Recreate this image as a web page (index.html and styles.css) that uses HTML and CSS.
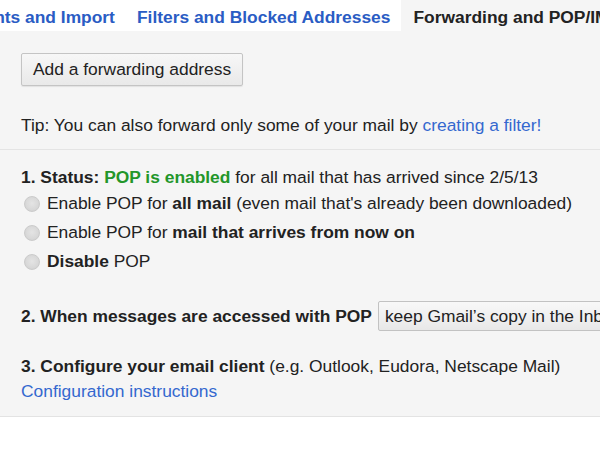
FILE: index.html
```html
<!DOCTYPE html>
<html lang="en">
<head>
<meta charset="utf-8">
<title>Settings - Forwarding and POP/IMAP</title>
<link rel="stylesheet" href="styles.css">
</head>
<body>
<div class="page">
  <nav class="tabs">
    <a class="tab" href="#">Accounts and Import</a>
    <a class="tab" href="#">Filters and Blocked Addresses</a>
    <a class="tab active" href="#">Forwarding and POP/IMAP</a>
  </nav>
  <main class="panel">
    <section class="section forwarding">
      <button class="btn" type="button">Add a forwarding address</button>
      <p class="tip">Tip: You can also forward only some of your mail by <a class="link" href="#">creating a filter!</a></p>
    </section>
    <section class="section pop">
      <div class="status"><b>1. Status:</b> <span class="ok">POP is enabled</span> for all mail that has arrived since 2/5/13</div>
      <ul class="options">
        <li class="option"><input class="radio" type="radio" name="pop"><span>Enable POP for <b>all mail</b> (even mail that's already been downloaded)</span></li>
        <li class="option"><input class="radio" type="radio" name="pop"><span>Enable POP for <b>mail that arrives from now on</b></span></li>
        <li class="option"><input class="radio" type="radio" name="pop"><span><b>Disable</b> POP</span></li>
      </ul>
      <div class="when">
        <b class="when-label">2. When messages are accessed with POP</b>
        <div class="select">keep Gmail’s copy in the Inbox</div>
      </div>
      <div class="configure">
        <div><b>3. Configure your email client</b> (e.g. Outlook, Eudora, Netscape Mail)</div>
        <div><a class="link" href="#">Configuration instructions</a></div>
      </div>
    </section>
  </main>
</div>
</body>
</html>
```
FILE: styles.css
```css
html, body {
  margin: 0;
  padding: 0;
  background: #ffffff;
}
body {
  font-family: "Liberation Sans", Arial, sans-serif;
  font-size: 17.4px;
  color: #222222;
  overflow: hidden;
  width: 600px;
  height: 450px;
}
.page {
  width: 600px;
  overflow: hidden;
}
.tabs {
  display: flex;
  height: 31px;
  background: #ffffff;
  margin-left: -70px;
  white-space: nowrap;
}
.tab {
  flex-shrink: 0;
  display: block;
  padding: 3px 11px 0 11px;
  height: 31px;
  box-sizing: border-box;
  line-height: 28px;
  font-weight: bold;
  color: #2a5cc4;
  text-decoration: none;
}
.tab.active {
  background: #f5f5f5;
  color: #222222;
  padding-left: 12px;
}
.panel {
  background: #f5f5f5;
  border-bottom: 1px solid #e3e3e3;
  box-shadow: 0 1px 2px rgba(0,0,0,0.04);
}
.section {
  padding-left: 21px;
}
.forwarding {
  padding-top: 22px;
  padding-bottom: 14px;
  border-bottom: 1px solid #e4e4e4;
}
.btn {
  display: block;
  font-family: inherit;
  font-size: inherit;
  color: #222222;
  height: 33px;
  padding: 0 11px;
  line-height: 31px;
  border: 1px solid #c4c4c4;
  border-radius: 2px;
  background: linear-gradient(#f7f7f7, #e9e9e9);
  box-shadow: 0 1px 1px rgba(0,0,0,0.08);
  margin: 0;
}
.tip {
  margin: 29px 0 0 0;
  line-height: 20px;
}
.link {
  color: #3468cf;
  text-decoration: none;
}
.pop {
  padding-top: 17px;
  padding-bottom: 12px;
}
.status {
  line-height: 20px;
  white-space: nowrap;
}
.ok {
  color: #23962a;
  font-weight: bold;
}
.options {
  list-style: none;
  margin: 2px 0 0 0;
  padding: 0;
}
.option {
  display: flex;
  align-items: center;
  height: 29px;
  white-space: nowrap;
}
.radio {
  appearance: none;
  -webkit-appearance: none;
  box-sizing: border-box;
  width: 16px;
  height: 16px;
  margin: 0 7px 0 3px;
  border-radius: 50%;
  border: 1px solid #cbcbcb;
  background: radial-gradient(circle at 50% 45%, #e4e4e4 0%, #d8d8d8 60%, #cacaca 100%);
  flex-shrink: 0;
}
.when {
  display: flex;
  align-items: center;
  margin-top: 25px;
  height: 30px;
  white-space: nowrap;
}
.when-label {
  flex-shrink: 0;
  margin-right: 6px;
}
.select {
  flex-shrink: 0;
  box-sizing: border-box;
  height: 30px;
  line-height: 28px;
  padding: 0 40px 0 6px;
  border: 1px solid #c2c2c2;
  border-radius: 2px;
  background: linear-gradient(#f8f8f8, #e8e8e8);
  color: #222222;
}
.configure {
  margin-top: 23px;
  line-height: 25px;
  white-space: nowrap;
}
```
